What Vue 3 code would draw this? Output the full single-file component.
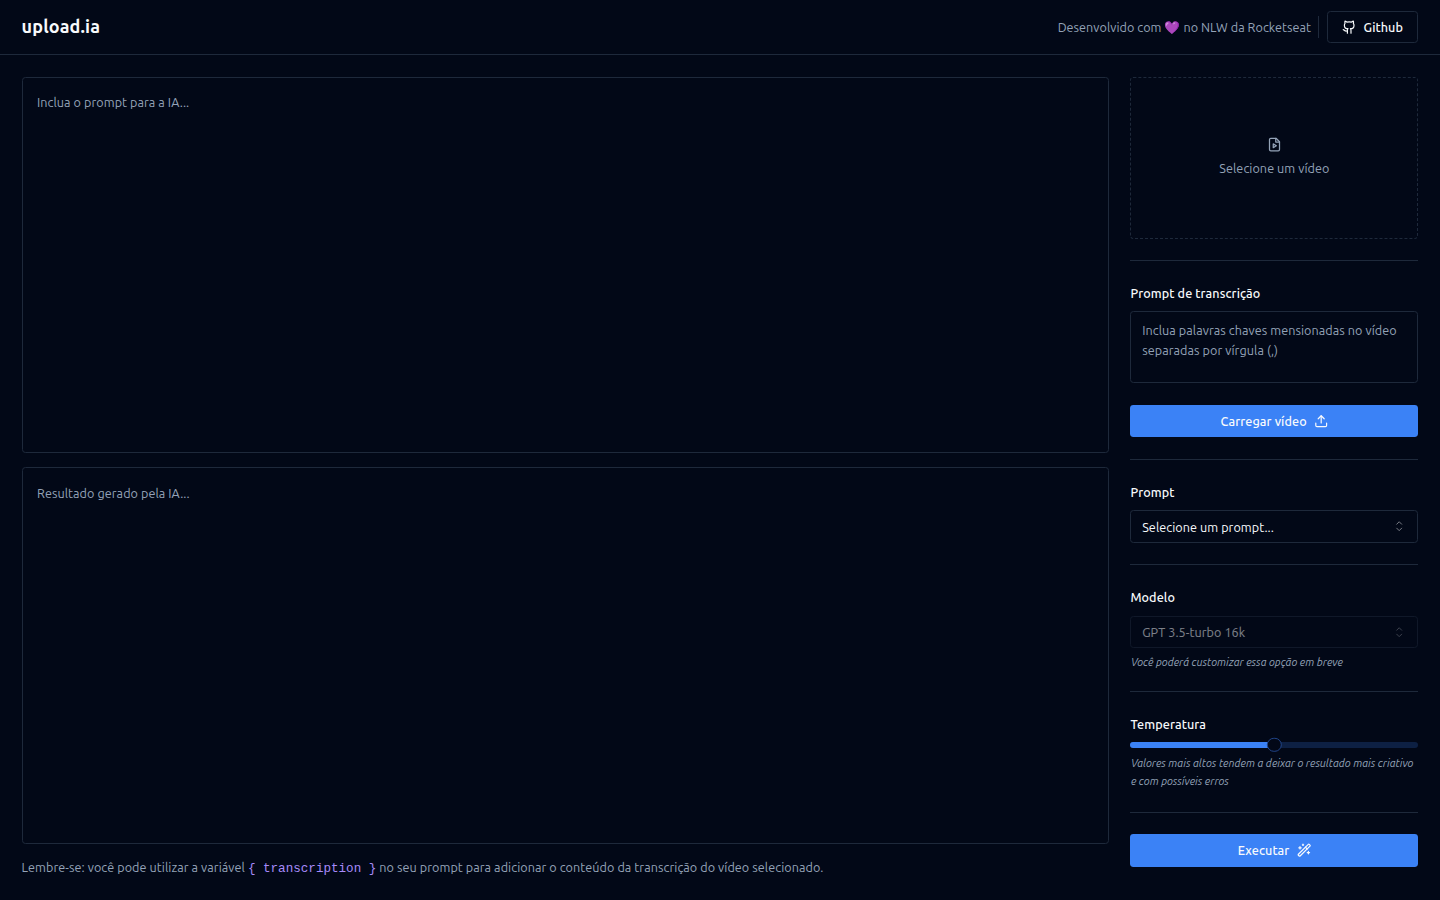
<script setup>
import { ref } from 'vue'

const temperature = ref(0.5)
</script>

<template>
  <div class="page">
    <header class="topbar">
      <h1 class="brand">upload.ia</h1>
      <div class="topbar-right">
        <span class="credit">Desenvolvido com 💜 no NLW da Rocketseat</span>
        <div class="vline"></div>
        <button class="btn outline">
          <svg class="icon" viewBox="0 0 24 24">
            <path d="M15 22v-4a4.8 4.8 0 0 0-1-3.5c3 0 6-2 6-5.5.08-1.25-.27-2.48-1-3.5.28-1.15.28-2.35 0-3.5 0 0-1 0-3 1.5-2.64-.5-5.36-.5-8 0C6 2 5 2 5 2c-.3 1.15-.3 2.35 0 3.5A5.403 5.403 0 0 0 4 9c0 3.5 3 5.5 6 5.5-.39.49-.68 1.05-.85 1.65-.17.6-.22 1.23-.15 1.85v4" />
            <path d="M9 18c-4.51 2-5-2-7-2" />
          </svg>
          <span>Github</span>
        </button>
      </div>
    </header>

    <main class="main">
      <section class="editor">
        <div class="areas">
          <textarea class="area" placeholder="Inclua o prompt para a IA..."></textarea>
          <textarea class="area" placeholder="Resultado gerado pela IA..." readonly></textarea>
        </div>
        <p class="hint">Lembre-se: você pode utilizar a variável <code>{ transcription }</code> no seu prompt para adicionar o conteúdo da transcrição do vídeo selecionado.</p>
      </section>

      <aside class="side">
        <div class="drop">
          <svg class="icon" viewBox="0 0 24 24">
            <path d="M14.5 2H6a2 2 0 0 0-2 2v16a2 2 0 0 0 2 2h12a2 2 0 0 0 2-2V7.5L14.5 2z" />
            <path d="M14 2v6h6" />
            <path d="m10 11 5 3-5 3v-6Z" />
          </svg>
          <span>Selecione um vídeo</span>
        </div>

        <div class="hline"></div>

        <div class="field">
          <label class="label first">Prompt de transcrição</label>
          <textarea class="small-area" placeholder="Inclua palavras chaves mensionadas no vídeo separadas por vírgula (,)"></textarea>
        </div>

        <button class="btn primary">
          <span>Carregar vídeo</span>
          <svg class="icon" viewBox="0 0 24 24">
            <path d="M21 15v4a2 2 0 0 1-2 2H5a2 2 0 0 1-2-2v-4" />
            <path d="M17 8l-5-5-5 5" />
            <path d="M12 3v12" />
          </svg>
        </button>

        <div class="hline"></div>

        <div class="field">
          <label class="label">Prompt</label>
          <div class="select">
            <span>Selecione um prompt...</span>
            <svg class="caret" viewBox="0 0 15 15">
              <path d="M4.93 5.43 7.5 2.86l2.57 2.57M4.93 9.57l2.57 2.57 2.57-2.57" />
            </svg>
          </div>
        </div>

        <div class="hline"></div>

        <div class="field">
          <label class="label">Modelo</label>
          <div class="select disabled">
            <span>GPT 3.5-turbo 16k</span>
            <svg class="caret" viewBox="0 0 15 15">
              <path d="M4.93 5.43 7.5 2.86l2.57 2.57M4.93 9.57l2.57 2.57 2.57-2.57" />
            </svg>
          </div>
          <span class="note">Você poderá customizar essa opção em breve</span>
        </div>

        <div class="hline"></div>

        <div class="field">
          <label class="label">Temperatura</label>
          <div class="slider">
            <div class="range" :style="{ width: temperature * 100 + '%' }"></div>
            <div class="thumb" :style="{ left: temperature * 100 + '%' }"></div>
          </div>
          <span class="note relaxed">Valores mais altos tendem a deixar o resultado mais criativo e com possíveis erros</span>
        </div>

        <div class="hline"></div>

        <button class="btn primary run">
          <span>Executar</span>
          <svg class="icon" viewBox="0 0 24 24">
            <path d="m21.64 3.64-1.28-1.28a1.08 1.08 0 0 0-1.52 0L2.36 18.84a1.08 1.08 0 0 0 0 1.52l1.28 1.28a1.08 1.08 0 0 0 1.52 0L21.64 5.16a1.08 1.08 0 0 0 0-1.52Z" />
            <path d="m14 7 3 3M5 6v4M19 14v4M10 2v2M7 8H3M21 16h-4M11 3H9" />
          </svg>
        </button>
      </aside>
    </main>
  </div>
</template>

<style>
html {
  font-size: 14.4px;
}
body {
  margin: 0;
  background: #020817;
}
</style>

<style scoped>
.page,
.page * {
  box-sizing: border-box;
}
.page {
  height: 100vh;
  display: flex;
  flex-direction: column;
  background: #020817;
  color: #f8fafc;
  font-family: Ubuntu, "Noto Sans", sans-serif;
  font-size: 12.6px;
  line-height: 18px;
  letter-spacing: 0.07px;
}
button,
textarea {
  font: inherit;
  letter-spacing: inherit;
  color: inherit;
  margin: 0;
}
.topbar {
  display: flex;
  align-items: center;
  justify-content: space-between;
  padding: 0.75rem 1.5rem;
  border-bottom: 1px solid #1e293b;
}
.brand {
  margin: 0;
  font-size: 18px;
  line-height: 25.2px;
  font-weight: 700;
  letter-spacing: 0.13px;
}
.topbar-right {
  display: flex;
  align-items: center;
  gap: 0.5rem;
}
.credit {
  color: #94a3b8;
  letter-spacing: 0.05px;
}
.vline {
  width: 1px;
  height: 1.5rem;
  margin-right: 0.2px;
  background: #1e293b;
}
.hline {
  height: 1px;
  flex-shrink: 0;
  background: #1e293b;
}
.icon {
  width: 1rem;
  height: 1rem;
  fill: none;
  stroke: currentColor;
  stroke-width: 2;
  stroke-linecap: round;
  stroke-linejoin: round;
}
.btn {
  display: flex;
  align-items: center;
  justify-content: center;
  gap: 0.5rem;
  height: 2.25rem;
  flex-shrink: 0;
  padding: 0 1rem;
  border: 0;
  border-radius: 3.4px;
  font-weight: 500;
  letter-spacing: 0.09px;
}
.outline {
  background: transparent;
  border: 1px solid #1e293b;
}
.primary {
  background: #3b82f6;
}
.run {
  height: 32.8px;
  margin-top: -0.4px;
  padding-bottom: 0.4px;
}
.main {
  flex: 1;
  min-height: 0;
  display: flex;
  gap: 1.5rem;
  padding: 1.5rem;
}
.editor {
  flex: 1;
  display: flex;
  flex-direction: column;
  gap: 1rem;
}
.areas {
  flex: 1;
  display: grid;
  grid-template-rows: 1fr 1fr;
  gap: 1rem;
}
.area,
.small-area {
  display: block;
  width: 100%;
  resize: none;
  outline: none;
  background: transparent;
  border: 1px solid #1e293b;
  border-radius: 3.4px;
  line-height: 20.475px;
}
.area {
  padding: 1rem;
}
.small-area {
  height: 5rem;
  padding: 0.5rem 0.75rem;
}
textarea::placeholder {
  color: #94a3b8;
  opacity: 1;
}
.hint {
  margin: -0.7px 0 0.7px;
  color: #94a3b8;
  line-height: 20.475px;
}
.hint code {
  font-family: "Liberation Mono", monospace;
  font-size: 12.6px;
  line-height: 1;
  letter-spacing: 0;
  color: #a78bfa;
}
.side {
  width: 20rem;
  display: flex;
  flex-direction: column;
  gap: 1.5rem;
}
.drop {
  height: 162px;
  flex-shrink: 0;
  display: flex;
  flex-direction: column;
  align-items: center;
  justify-content: center;
  gap: 0.5rem;
  border: 1px dashed #1e293b;
  border-radius: 3.4px;
  color: #94a3b8;
}
.drop .icon {
  width: 15px;
  height: 15px;
  margin: -0.3px 0;
}
.field {
  display: flex;
  flex-direction: column;
  gap: 0.5rem;
}
.label {
  font-weight: 500;
  line-height: 21.6px;
  letter-spacing: 0.1px;
}
.first {
  line-height: 21.4px;
}
.select {
  height: 2.25rem;
  display: flex;
  align-items: center;
  justify-content: space-between;
  padding: 0.6px 0.75rem 0;
  border: 1px solid #1e293b;
  border-radius: 3.4px;
}
.disabled {
  opacity: 0.5;
}
.caret {
  width: 1rem;
  height: 1rem;
  margin-bottom: 0.8px;
  fill: none;
  stroke: currentColor;
  stroke-width: 1;
  stroke-linecap: round;
  stroke-linejoin: round;
  opacity: 0.5;
}
.note {
  padding-left: 0.5px;
  font-size: 10.8px;
  line-height: 14.4px;
  font-style: italic;
  letter-spacing: 0.01px;
  color: #94a3b8;
}
.relaxed {
  line-height: 17.55px;
  letter-spacing: 0;
}
.slider {
  position: relative;
  height: 6px;
  margin-top: -0.6px;
  border-radius: 3px;
  background: rgba(59, 130, 246, 0.2);
}
.range {
  height: 100%;
  border-radius: 3px 0 0 3px;
  background: #3b82f6;
}
.thumb {
  position: absolute;
  top: 50%;
  width: 14.4px;
  height: 14.4px;
  border: 1px solid #21458a;
  border-radius: 50%;
  background: #020817;
  transform: translate(-50%, -50%);
}
</style>
